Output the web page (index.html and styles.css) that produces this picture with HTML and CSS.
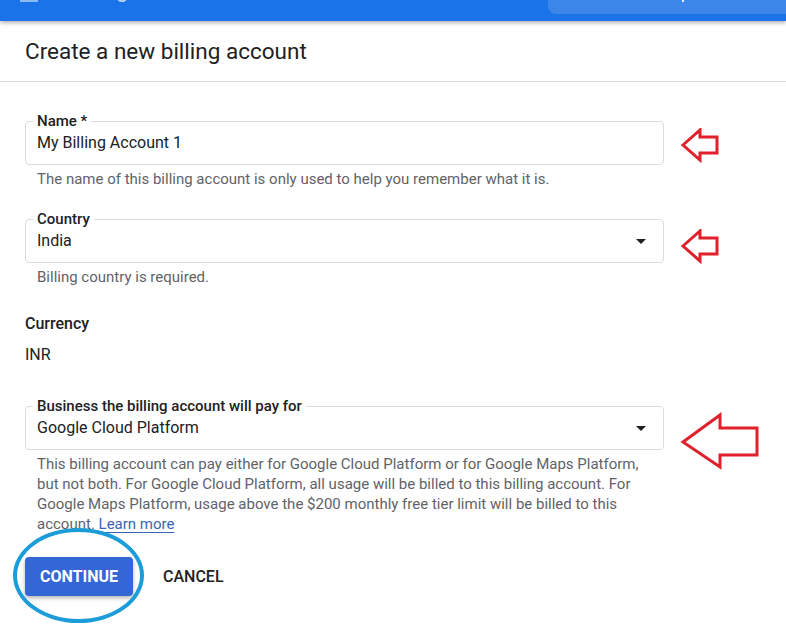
FILE: index.html
```html
<!DOCTYPE html>
<html lang="en">
<head>
  <meta charset="UTF-8">
  <meta name="viewport" content="width=device-width, initial-scale=1.0">
  <title>Create a new billing account</title>
  <link rel="stylesheet" href="styles.css">
</head>
<body>
  <!-- Top bar (mostly scrolled off) -->
  <header class="topbar">
    <div class="menu-icon"></div>
    <div class="brand"><span class="brand-google">Google</span> Cloud Platform</div>
    <div class="search"><span class="search-dot"></span></div>
  </header>

  <div class="page">
    <div class="page-title">
      <h1>Create a new billing account</h1>
    </div>

    <form class="form">
      <!-- Name -->
      <div class="field">
        <div class="field-row">
          <fieldset class="outline">
            <legend>Name *</legend>
            <div class="value">My Billing Account 1</div>
          </fieldset>
          <svg class="mark mark-name" width="39" height="35" viewBox="0 0 39 35">
            <polygon points="2,17 19,2 19,9 36,9 36,25 19,25 19,32" />
          </svg>
        </div>
        <p class="hint">The name of this billing account is only used to help you remember what it is.</p>
      </div>

      <!-- Country -->
      <div class="field">
        <div class="field-row">
          <fieldset class="outline">
            <legend>Country</legend>
            <div class="value">
              <span>India</span>
              <svg class="caret" width="10" height="5" viewBox="0 0 10 5"><polygon points="0,0 10,0 5,5" /></svg>
            </div>
          </fieldset>
          <svg class="mark mark-country" width="39" height="35" viewBox="0 0 39 35">
            <polygon points="2,17 19,2 19,9 36,9 36,25 19,25 19,32" />
          </svg>
        </div>
        <p class="hint">Billing country is required.</p>
      </div>

      <!-- Currency -->
      <div class="currency">
        <div class="currency-label">Currency</div>
        <div class="currency-value">INR</div>
      </div>

      <!-- Business -->
      <div class="field">
        <div class="field-row">
          <fieldset class="outline">
            <legend>Business the billing account will pay for</legend>
            <div class="value">
              <span>Google Cloud Platform</span>
              <svg class="caret" width="10" height="5" viewBox="0 0 10 5"><polygon points="0,0 10,0 5,5" /></svg>
            </div>
          </fieldset>
          <svg class="mark mark-lg" width="80" height="58" viewBox="0 0 80 58">
            <polygon points="3,30 40,3 40,16 77,16 77,43 40,43 40,55" />
          </svg>
        </div>
        <p class="hint hint-long">This billing account can pay either for Google Cloud Platform or for Google Maps Platform, but not both. For Google Cloud Platform, all usage will be billed to this billing account. For Google Maps Platform, usage above the $200 monthly free tier limit will be billed to this account. <a href="#">Learn more</a></p>
      </div>

      <div class="actions">
        <button type="button" class="btn-primary">CONTINUE</button>
        <button type="button" class="btn-text">CANCEL</button>
      </div>
    </form>

    <!-- Annotation circle round the continue button -->
    <div class="circle-mark"></div>
  </div>
</body>
</html>
```

FILE: styles.css
```css
/* Reset */
* {
  margin: 0;
  padding: 0;
  box-sizing: border-box;
}

body {
  font-family: Roboto, 'Liberation Sans', Arial, sans-serif;
  color: #202124;
  background: #fff;
  width: 786px;
}

/* Top bar */
.topbar {
  position: relative;
  z-index: 2;
  display: flex;
  height: 21px;
  overflow: hidden;
  background: #1a73e8;
  box-shadow: 0 2px 4px rgba(0, 0, 0, 0.3);
  color: #fff;
}

.menu-icon {
  width: 18px;
  height: 2px;
  margin: 0 0 0 20px;
  background: rgba(255, 255, 255, 0.5);
}

.brand {
  margin: -24px 0 0 38px;
  font-size: 22px;
  line-height: 28px;
  white-space: nowrap;
}

.brand-google {
  color: rgba(255, 255, 255, 0.7);
}

.search {
  display: flex;
  justify-content: center;
  width: 238px;
  height: 14px;
  margin-left: auto;
  background: #3c86e9;
  border-bottom-left-radius: 8px;
}

.search-dot {
  width: 2px;
  height: 2px;
  margin-left: 32px;
  background: #e8f0fe;
}

/* Page */
.page {
  position: relative;
  min-height: 619px;
}

.page-title {
  height: 61px;
  padding: 16px 0 0 25px;
  border-bottom: 1px solid #dadce0;
}

.page-title h1 {
  font-size: 22.5px;
  font-weight: 400;
  line-height: 28px;
}

.form {
  padding: 31px 0 0 25px;
}

/* Outlined fields */
.field {
  margin-bottom: 22px;
}

.field-row {
  display: flex;
  align-items: flex-end;
}

.outline {
  width: 639px;
  padding: 0 7px 9px;
  border: 1px solid #dadce0;
  border-radius: 4px;
}

.outline legend {
  padding: 0 4px;
  font-size: 15px;
  font-weight: 500;
  line-height: 16px;
}

.value {
  display: flex;
  align-items: center;
  justify-content: space-between;
  padding: 2px 10px 0 4px;
  font-size: 16px;
  line-height: 24px;
}

.caret {
  fill: #202124;
}

.mark {
  fill: none;
  stroke: #e0202b;
  stroke-width: 3;
  flex-shrink: 0;
}

.mark-name {
  margin: 0 0 2px 17px;
}

.mark-country {
  margin: 0 0 -1px 17px;
}

.mark-lg {
  margin: 0 0 -20px 16px;
}

.hint {
  margin-top: 4px;
  padding-left: 12px;
  font-size: 15px;
  line-height: 20px;
  color: #5f6368;
}

.hint-long {
  width: 620px;
}

.hint a {
  color: #3d63b8;
  text-decoration: underline;
  text-underline-offset: 3px;
}

/* Currency */
.currency {
  margin: 27px 0 33px;
  font-size: 16px;
  line-height: 20px;
}

.currency-label {
  font-weight: 500;
  margin-bottom: 11px;
}

/* Buttons */
.actions {
  display: flex;
  align-items: center;
  gap: 6px;
  margin-top: 23px;
}

.btn-primary {
  height: 39px;
  padding: 0 15px;
  font-family: inherit;
  font-size: 16px;
  font-weight: 700;
  color: #fff;
  background: #3367d6;
  border: none;
  border-radius: 4px;
  box-shadow: 0 2px 4px rgba(0, 0, 0, 0.3);
}

.btn-text {
  padding: 0 24px;
  font-family: inherit;
  font-size: 16px;
  font-weight: 500;
  color: #202124;
  background: none;
  border: none;
}

.circle-mark {
  position: absolute;
  left: 13px;
  top: 507px;
  width: 131px;
  height: 95px;
  border: 4px solid #1c9cd8;
  border-radius: 50%;
}
```
